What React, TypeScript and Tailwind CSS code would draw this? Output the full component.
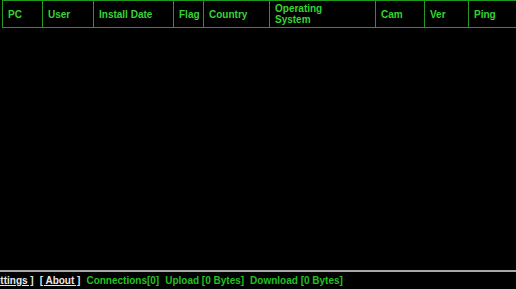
const COLUMNS: { label: string; width: string; twoLine?: boolean }[] = [
  { label: 'PC', width: 'w-[40px]' },
  { label: 'User', width: 'w-[51px]' },
  { label: 'Install Date', width: 'w-[80px]' },
  { label: 'Flag', width: 'w-[30px]' },
  { label: 'Country', width: 'w-[66px]' },
  { label: 'Operating System', width: 'w-[106px]', twoLine: true },
  { label: 'Cam', width: 'w-[49px]' },
  { label: 'Ver', width: 'w-[44px]' },
  { label: 'Ping', width: 'flex-1' },
];

export default function App() {
  return (
    <div
      className="w-[516px] h-[289px] bg-black flex flex-col overflow-hidden text-[10px] font-bold"
      style={{ fontFamily: '"Liberation Sans", Arial, sans-serif' }}
    >
      {/* Client list header */}
      <div className="flex h-[28px] ml-[2px] border-t border-b border-[#1f9a1f] shrink-0">
        {COLUMNS.map((col) => (
          <div
            key={col.label}
            className={`${col.width} shrink-0 border-l border-[#1f9a1f] flex items-center pl-[5px] text-[#33d633] leading-[11px]`}
          >
            {col.twoLine ? (
              <span>
                Operating
                <br />
                System
              </span>
            ) : (
              col.label
            )}
          </div>
        ))}
      </div>

      {/* Empty list area */}
      <div className="flex-1" />

      {/* Status bar */}
      <div className="h-[2px] bg-[#a8a8a8] shrink-0" />
      <div className="h-[17px] flex items-center gap-[6px] ml-[-18px] whitespace-nowrap shrink-0">
        <span className="text-[#e8e8e8] underline">[ Settings ]</span>
        <span className="text-[#e8e8e8] underline">[ About ]</span>
        <span className="text-[#22c022]">Connections[0]</span>
        <span className="text-[#22c022]">Upload [0 Bytes]</span>
        <span className="text-[#22c022]">Download [0 Bytes]</span>
      </div>
    </div>
  );
}
